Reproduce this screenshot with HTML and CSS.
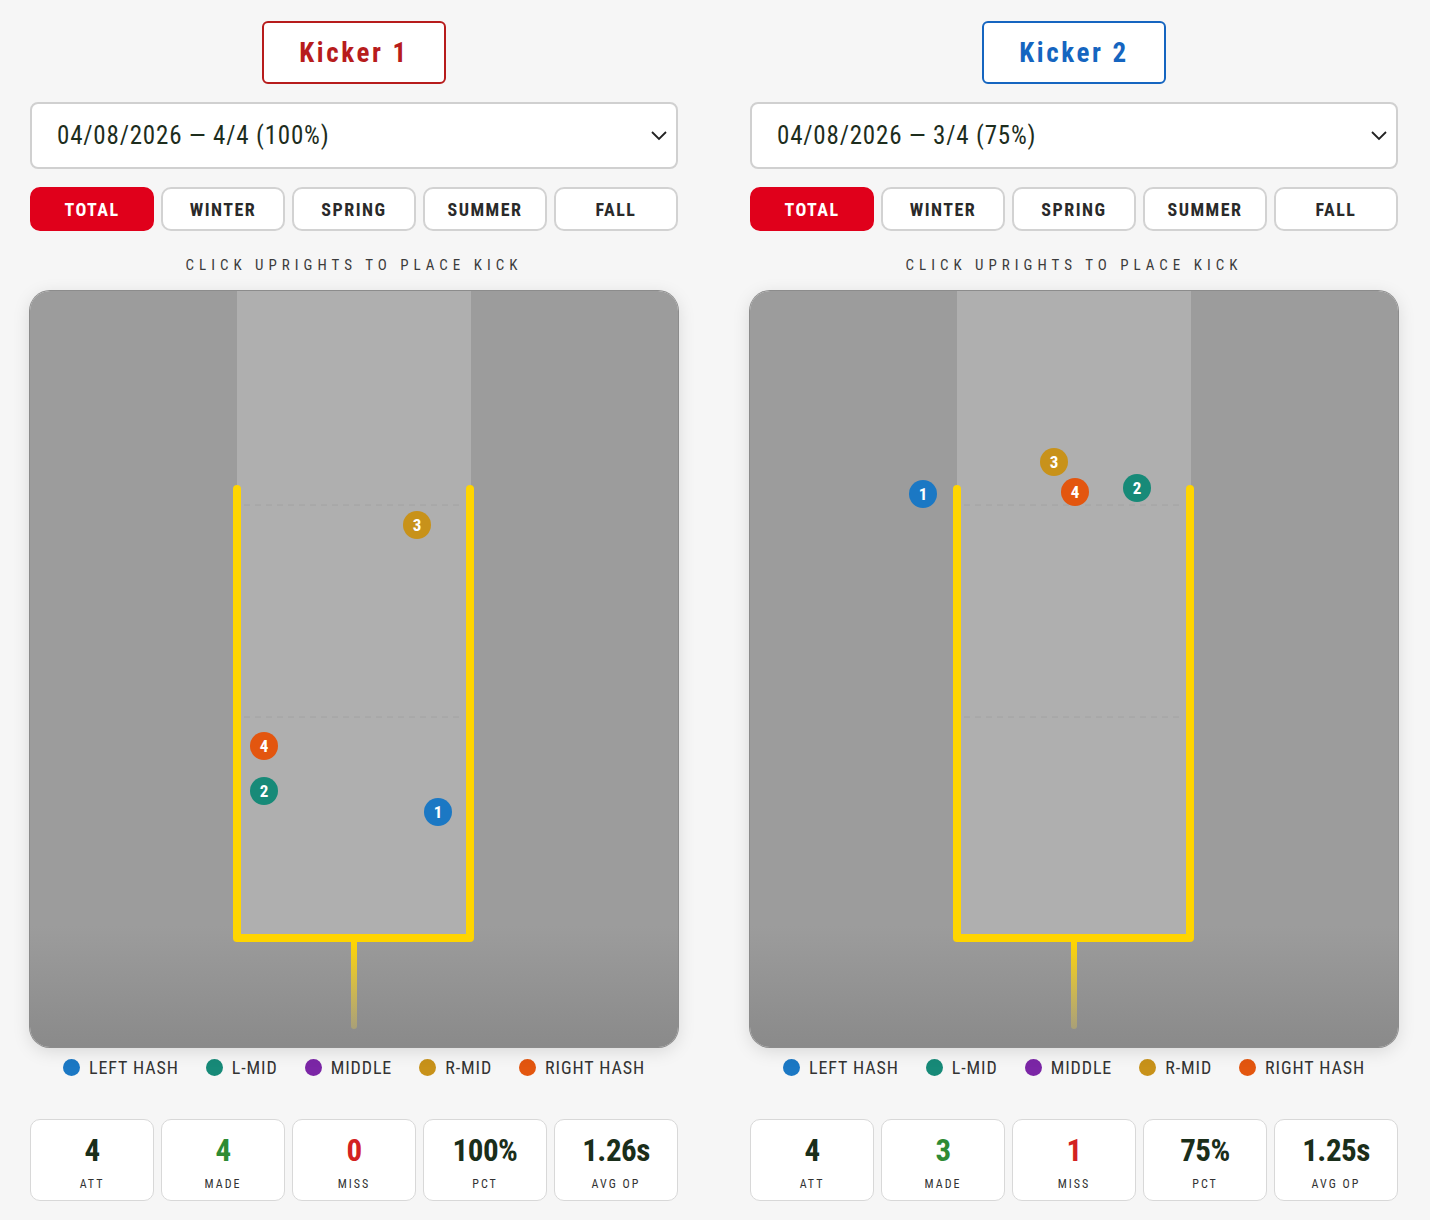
FILE: index.html
```html
<!DOCTYPE html>
<html lang="en">
<head>
<meta charset="utf-8">
<title>Kicker Compare</title>
<link rel="stylesheet" href="styles.css">
</head>
<body>
<main class="page">

  <section class="kicker">
    <div class="title-row"><div class="title title-red">Kicker 1</div></div>
    <div class="select">
      <span class="select-text">04/08/2026 — 4/4 (100%)</span>
      <svg class="chev" width="18" height="12" viewBox="0 0 18 12"><path d="M2 2 L9 9 L16 2" fill="none" stroke="#222" stroke-width="1.8"/></svg>
    </div>
    <div class="seasons">
      <div class="season active">TOTAL</div>
      <div class="season">WINTER</div>
      <div class="season">SPRING</div>
      <div class="season">SUMMER</div>
      <div class="season">FALL</div>
    </div>
    <div class="hint">CLICK UPRIGHTS TO PLACE KICK</div>
    <div class="field">
      <svg class="goal" width="648" height="756" viewBox="0 0 648 756">
        <defs>
          <linearGradient id="post1" gradientUnits="userSpaceOnUse" x1="0" y1="651" x2="0" y2="740">
            <stop offset="0" stop-color="#ffd500"/>
            <stop offset="1" stop-color="#e6c84a" stop-opacity="0.3"/>
          </linearGradient>
        </defs>
        <rect x="207" y="0" width="234" height="647" fill="#afafaf"/>
        <line x1="214" y1="214" x2="434" y2="214" stroke="#a2a2a2" stroke-width="1" stroke-dasharray="6 5"/>
        <line x1="214" y1="426" x2="434" y2="426" stroke="#a2a2a2" stroke-width="1" stroke-dasharray="6 5"/>
        <rect x="321" y="647" width="6" height="91" rx="3" fill="url(#post1)"/>
        <path d="M207 198 V647 H440 V198" fill="none" stroke="#ffd500" stroke-width="8" stroke-linecap="round" stroke-linejoin="round"/>
      </svg>
      <span class="mark c-rmid" style="left:387px;top:234px">3</span>
      <span class="mark c-rhash" style="left:234px;top:455px">4</span>
      <span class="mark c-lmid" style="left:234px;top:500px">2</span>
      <span class="mark c-lhash" style="left:408px;top:521px">1</span>
    </div>
    <div class="legend">
      <div class="legend-item"><span class="dot c-lhash"></span>LEFT HASH</div>
      <div class="legend-item"><span class="dot c-lmid"></span>L-MID</div>
      <div class="legend-item"><span class="dot c-middle"></span>MIDDLE</div>
      <div class="legend-item"><span class="dot c-rmid"></span>R-MID</div>
      <div class="legend-item"><span class="dot c-rhash"></span>RIGHT HASH</div>
    </div>
    <div class="stats">
      <div class="stat"><div class="stat-val">4</div><div class="stat-lbl">ATT</div></div>
      <div class="stat"><div class="stat-val v-made">4</div><div class="stat-lbl">MADE</div></div>
      <div class="stat"><div class="stat-val v-miss">0</div><div class="stat-lbl">MISS</div></div>
      <div class="stat"><div class="stat-val">100%</div><div class="stat-lbl">PCT</div></div>
      <div class="stat"><div class="stat-val">1.26s</div><div class="stat-lbl">AVG OP</div></div>
    </div>
  </section>

  <section class="kicker">
    <div class="title-row"><div class="title title-blue">Kicker 2</div></div>
    <div class="select">
      <span class="select-text">04/08/2026 — 3/4 (75%)</span>
      <svg class="chev" width="18" height="12" viewBox="0 0 18 12"><path d="M2 2 L9 9 L16 2" fill="none" stroke="#222" stroke-width="1.8"/></svg>
    </div>
    <div class="seasons">
      <div class="season active">TOTAL</div>
      <div class="season">WINTER</div>
      <div class="season">SPRING</div>
      <div class="season">SUMMER</div>
      <div class="season">FALL</div>
    </div>
    <div class="hint">CLICK UPRIGHTS TO PLACE KICK</div>
    <div class="field">
      <svg class="goal" width="648" height="756" viewBox="0 0 648 756">
        <defs>
          <linearGradient id="post2" gradientUnits="userSpaceOnUse" x1="0" y1="651" x2="0" y2="740">
            <stop offset="0" stop-color="#ffd500"/>
            <stop offset="1" stop-color="#e6c84a" stop-opacity="0.3"/>
          </linearGradient>
        </defs>
        <rect x="207" y="0" width="234" height="647" fill="#afafaf"/>
        <line x1="214" y1="214" x2="434" y2="214" stroke="#a2a2a2" stroke-width="1" stroke-dasharray="6 5"/>
        <line x1="214" y1="426" x2="434" y2="426" stroke="#a2a2a2" stroke-width="1" stroke-dasharray="6 5"/>
        <rect x="321" y="647" width="6" height="91" rx="3" fill="url(#post2)"/>
        <path d="M207 198 V647 H440 V198" fill="none" stroke="#ffd500" stroke-width="8" stroke-linecap="round" stroke-linejoin="round"/>
      </svg>
      <span class="mark c-lhash" style="left:173px;top:203px">1</span>
      <span class="mark c-rmid" style="left:304px;top:171px">3</span>
      <span class="mark c-rhash" style="left:325px;top:201px">4</span>
      <span class="mark c-lmid" style="left:387px;top:197px">2</span>
    </div>
    <div class="legend">
      <div class="legend-item"><span class="dot c-lhash"></span>LEFT HASH</div>
      <div class="legend-item"><span class="dot c-lmid"></span>L-MID</div>
      <div class="legend-item"><span class="dot c-middle"></span>MIDDLE</div>
      <div class="legend-item"><span class="dot c-rmid"></span>R-MID</div>
      <div class="legend-item"><span class="dot c-rhash"></span>RIGHT HASH</div>
    </div>
    <div class="stats">
      <div class="stat"><div class="stat-val">4</div><div class="stat-lbl">ATT</div></div>
      <div class="stat"><div class="stat-val v-made">3</div><div class="stat-lbl">MADE</div></div>
      <div class="stat"><div class="stat-val v-miss">1</div><div class="stat-lbl">MISS</div></div>
      <div class="stat"><div class="stat-val">75%</div><div class="stat-lbl">PCT</div></div>
      <div class="stat"><div class="stat-val">1.25s</div><div class="stat-lbl">AVG OP</div></div>
    </div>
  </section>

</main>
</body>
</html>
```

FILE: styles.css
```css
html, body {
  margin: 0;
  padding: 0;
  background: #f6f6f6;
}
body {
  font-family: "Roboto Condensed", "DejaVu Sans", sans-serif;
  font-stretch: condensed;
  color: #222;
}
.page {
  display: flex;
  gap: 72px;
  padding: 21px 32px 0 30px;
}
.kicker {
  width: 648px;
  display: flex;
  flex-direction: column;
}
.title-row {
  display: flex;
  justify-content: center;
}
.title {
  height: 59px;
  padding: 0 35px;
  display: flex;
  align-items: center;
  border: 2px solid;
  border-radius: 6px;
  font-weight: bold;
  font-size: 27px;
  letter-spacing: 2.6px;
  background: #fff;
  white-space: nowrap;
}
.title-red { color: #b71c1c; border-color: #b71c1c; }
.title-blue { color: #1565c0; border-color: #1565c0; }

.select {
  margin-top: 18px;
  height: 63px;
  background: #fff;
  border: 2px solid #d0d0d0;
  border-radius: 8px;
  display: flex;
  align-items: center;
  justify-content: space-between;
  padding: 0 8px 0 25px;
}
.select-text {
  font-size: 25px;
  letter-spacing: 0.8px;
  color: #1d2d1d;
  white-space: nowrap;
}

.seasons {
  margin-top: 18px;
  display: grid;
  grid-template-columns: repeat(5, 1fr);
  gap: 7px;
}
.season {
  height: 40px;
  border: 2px solid #d2d2d2;
  border-radius: 10px;
  background: #fff;
  display: flex;
  align-items: center;
  justify-content: center;
  font-weight: bold;
  font-size: 18px;
  letter-spacing: 1.5px;
  color: #2a2a2a;
}
.season.active {
  background: #e0001b;
  border-color: #e0001b;
  color: #fff;
}
.hint {
  margin-top: 24px;
  height: 20px;
  line-height: 20px;
  text-align: center;
  font-size: 15px;
  letter-spacing: 5px;
  color: #3c3c3c;
  white-space: nowrap;
}
.field {
  margin-top: 16px;
  position: relative;
  height: 756px;
  border-radius: 20px;
  overflow: hidden;
  background: linear-gradient(to bottom, #9c9c9c 0%, #9c9c9c 84%, #8a8a8a 100%);
  box-shadow: 0 0 0 1px #8c8c8c, 0 4px 18px rgba(0, 0, 0, 0.13);
}
.goal {
  position: absolute;
  left: 0;
  top: 0;
  display: block;
}
.mark {
  position: absolute;
  width: 28px;
  height: 28px;
  margin: -14px 0 0 -14px;
  border-radius: 50%;
  color: #fff;
  font-weight: bold;
  font-size: 17px;
  display: flex;
  align-items: center;
  justify-content: center;
}
.c-lhash { background: #1b78c4; }
.c-lmid { background: #178a78; }
.c-middle { background: #7b26a6; }
.c-rmid { background: #c8921a; }
.c-rhash { background: #e3560f; }

.legend {
  margin-top: 8px;
  height: 24px;
  display: flex;
  justify-content: center;
  align-items: center;
  gap: 27px;
}
.legend-item {
  display: flex;
  align-items: center;
  gap: 9px;
  font-size: 18px;
  letter-spacing: 0.9px;
  color: #333;
  white-space: nowrap;
}
.dot {
  width: 17px;
  height: 17px;
  border-radius: 50%;
  flex: none;
}
.stats {
  margin-top: 40px;
  display: grid;
  grid-template-columns: repeat(5, 1fr);
  gap: 7px;
}
.stat {
  height: 80px;
  background: #fff;
  border: 1px solid #d8d8d8;
  border-radius: 10px;
  display: flex;
  flex-direction: column;
  align-items: center;
}
.stat-val {
  margin-top: 14px;
  height: 34px;
  line-height: 34px;
  font-size: 31px;
  font-weight: bold;
  letter-spacing: -0.5px;
  color: #1a2e1a;
}
.v-made { color: #2e8b34; }
.v-miss { color: #d32222; }
.stat-lbl {
  margin-top: 9px;
  font-size: 12px;
  letter-spacing: 2px;
  color: #333;
}
```
